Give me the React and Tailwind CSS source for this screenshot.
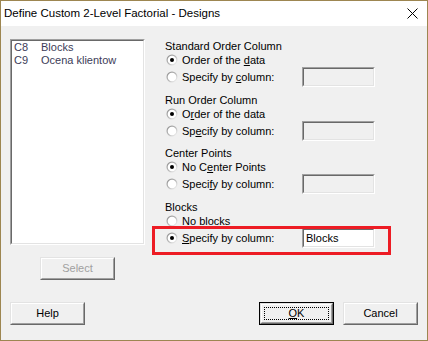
import React from 'react';

const Radio = ({ checked }) => (
  <svg width="12" height="12" viewBox="0 0 12 12" className="shrink-0">
    <defs>
      <linearGradient id="rg" x1="0" y1="0" x2="1" y2="1">
        <stop offset="0" stopColor="#8a8a8a" />
        <stop offset="0.5" stopColor="#b8b8b8" />
        <stop offset="1" stopColor="#ffffff" />
      </linearGradient>
    </defs>
    <circle cx="6" cy="6" r="5.5" fill="url(#rg)" />
    <circle cx="6" cy="6" r="4.3" fill="#ffffff" />
    {checked && <circle cx="6" cy="6" r="2" fill="#000000" />}
  </svg>
);

const Sunken = ({ className = '', innerClass = '', children }) => (
  <div className={`border border-t-[#a0a0a0] border-l-[#a0a0a0] border-r-white border-b-white ${className}`}>
    <div className={`w-full h-full border border-t-[#696969] border-l-[#696969] border-r-[#e3e3e3] border-b-[#e3e3e3] ${innerClass}`}>
      {children}
    </div>
  </div>
);

const Button = ({ children, isDefault, disabled, className = '' }) => {
  const face = (
    <div className="w-full h-full border border-t-[#e3e3e3] border-l-[#e3e3e3] border-r-[#696969] border-b-[#696969]">
      <div className="w-full h-full border border-t-white border-l-white border-r-[#a0a0a0] border-b-[#a0a0a0] flex items-center justify-center p-[2px]">
        <div className={`w-full h-full flex items-center justify-center ${isDefault ? 'border border-dotted border-black' : ''} ${disabled ? 'text-[#a0a0a0]' : 'text-black'}`}>
          {children}
        </div>
      </div>
    </div>
  );
  return (
    <div className={`w-[75px] h-[23px] bg-[#f0f0f0] ${isDefault ? 'border border-black' : ''} ${className}`}>
      {face}
    </div>
  );
};

const RadioRow = ({ checked, children }) => (
  <div className="flex items-center h-[14px] pl-[1px]">
    <Radio checked={checked} />
    <span className="ml-[4px] leading-[14px]">{children}</span>
  </div>
);

const SpecifyRow = ({ checked, children, value }) => (
  <div className="flex items-center h-[20px]">
    <div className="w-[137px] flex items-center pl-[1px]">
      <Radio checked={checked} />
      <span className="ml-[4px] leading-[14px]">{children}</span>
    </div>
    <Sunken className={`w-[73px] h-[20px] ${value ? 'bg-white' : 'bg-[#f0f0f0]'}`} innerClass="flex items-center pl-[2px]">
      {value && <span className="leading-[14px] text-black">{value}</span>}
    </Sunken>
  </div>
);

const Section = ({ title, children, className = '' }) => (
  <div className={className}>
    <div className="h-[14px] leading-[14px]">{title}</div>
    {children}
  </div>
);

export default function App() {
  return (
    <div className="w-[428px] h-[341px] border border-[#9d8651] flex flex-col bg-[#f0f0f0] text-[11px] text-black font-['Liberation_Sans',Arial,sans-serif] select-none">
      {/* Title bar */}
      <div className="h-[25px] bg-white flex items-center justify-between pl-[3px] pr-[9px]">
        <span className="text-[11.5px] leading-none">Define Custom 2-Level Factorial - Designs</span>
        <svg width="11" height="11" viewBox="0 0 11 11">
          <path d="M0.5 0.5 L10.5 10.5 M10.5 0.5 L0.5 10.5" stroke="#000" strokeWidth="1" />
        </svg>
      </div>

      {/* Body */}
      <div className="flex-1 flex flex-col pl-[9px] pt-[13px]">
        <div className="flex">
          {/* Variables list */}
          <div className="w-[135px] flex flex-col">
            <Sunken className="w-[135px] h-[206px] bg-white" innerClass="pl-[2px] text-[#3c3c58]">
              <div className="flex h-[13px] items-center leading-[13px]">
                <span className="w-[27px]">C8</span>
                <span>Blocks</span>
              </div>
              <div className="flex h-[13px] items-center leading-[13px]">
                <span className="w-[27px]">C9</span>
                <span>Ocena klientow</span>
              </div>
            </Sunken>
            <Button disabled className="ml-[30px] mt-[12px]">Select</Button>
          </div>

          {/* Options */}
          <div className="ml-[20px] flex flex-col">
            <Section title="Standard Order Column">
              <RadioRow checked>Order of the <u>d</u>ata</RadioRow>
              <SpecifyRow>Specify by <u>c</u>olumn:</SpecifyRow>
            </Section>
            <Section title="Run Order Column" className="mt-[6px]">
              <RadioRow checked>O<u>r</u>der of the data</RadioRow>
              <SpecifyRow>Sp<u>e</u>cify by column:</SpecifyRow>
            </Section>
            <Section title="Center Points" className="mt-[5px]">
              <RadioRow checked>No C<u>e</u>nter Points</RadioRow>
              <SpecifyRow>Speci<u>f</u>y by column:</SpecifyRow>
            </Section>
            <Section title="Blocks" className="mt-[6px]">
              <RadioRow><u>N</u>o blocks</RadioRow>
              <div className="relative">
                <SpecifyRow checked value="Blocks"><u>S</u>pecify by column:</SpecifyRow>
                <div className="absolute left-[-13px] top-[-2px] w-[239px] h-[29px] border-[3px] border-[#ed1c24] pointer-events-none" />
              </div>
            </Section>
          </div>
        </div>

        {/* Bottom buttons */}
        <div className="flex mt-[22px]">
          <Button>Help</Button>
          <Button isDefault className="ml-[174px]"><span><u>O</u>K</span></Button>
          <Button className="ml-[9px]">Cancel</Button>
        </div>
      </div>
    </div>
  );
}
